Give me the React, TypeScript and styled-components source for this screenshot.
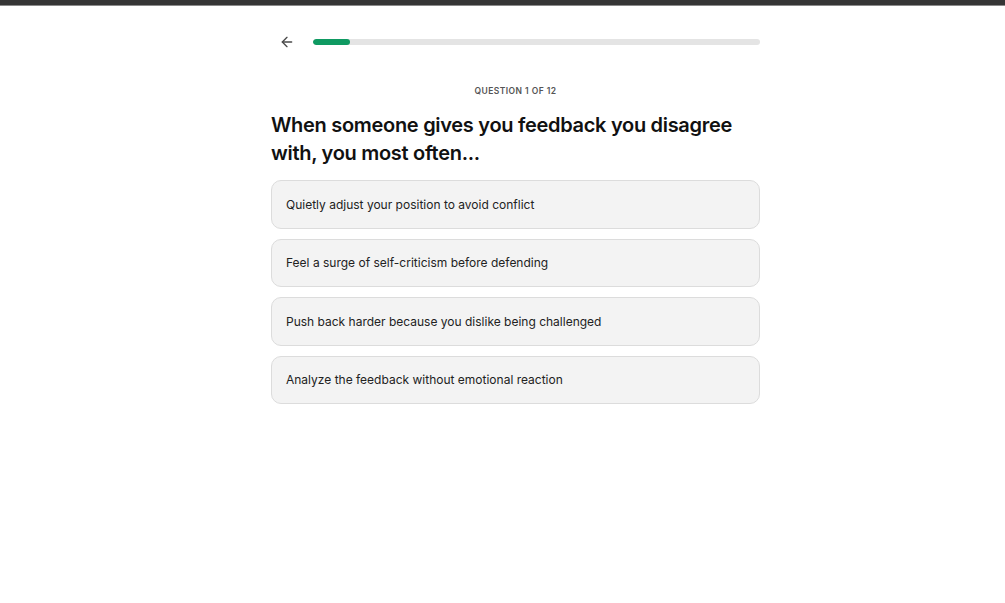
import styled, { createGlobalStyle } from "styled-components"
import { ArrowLeft } from "lucide-react"

const options = [
  "Quietly adjust your position to avoid conflict",
  "Feel a surge of self-criticism before defending",
  "Push back harder because you dislike being challenged",
  "Analyze the feedback without emotional reaction",
]

export default function App() {
  const current = 1
  const total = 12
  return (
    <>
      <GlobalStyle />
      <TopBar />
      <Page>
        <Column>
          <Header>
            <BackButton aria-label="Back">
              <ArrowLeft size={16} strokeWidth={2} />
            </BackButton>
            <Track>
              <Fill style={{ width: `${(current / total) * 100}%` }} />
            </Track>
          </Header>
          <Counter>
            Question {current} of {total}
          </Counter>
          <Question>When someone gives you feedback you disagree with, you most often...</Question>
          <Options>
            {options.map((o) => (
              <Option key={o}>{o}</Option>
            ))}
          </Options>
        </Column>
      </Page>
    </>
  )
}

const GlobalStyle = createGlobalStyle`
  body {
    margin: 0;
    background: #fff;
    font-family: Inter, "Noto Sans", sans-serif;
    color: #111;
  }
`

const TopBar = styled.div`
  height: 5px;
  background: #353535;
  border-bottom: 1px solid #8a8a8a;
`

const Page = styled.main`
  display: flex;
  justify-content: center;
  padding: 24px 0 0 26px;
`

const Column = styled.div`
  width: 489px;
  display: flex;
  flex-direction: column;
`

const Header = styled.div`
  height: 24px;
  display: flex;
  align-items: center;
  gap: 18px;
  padding-left: 8px;
`

const BackButton = styled.button`
  border: 0;
  background: none;
  padding: 0;
  width: 16px;
  height: 24px;
  display: flex;
  align-items: center;
  color: #4a4a4a;
  cursor: pointer;
`

const Track = styled.div`
  flex: 1;
  height: 6px;
  border-radius: 3px;
  background: #e4e4e4;
  overflow: hidden;
`

const Fill = styled.div`
  height: 100%;
  border-radius: 3px;
  background: #0f9a62;
`

const Counter = styled.div`
  margin-top: 31px;
  text-align: center;
  font-size: 8.5px;
  line-height: 12px;
  font-weight: 600;
  letter-spacing: 0.45px;
  text-transform: uppercase;
  color: #555;
`

const Question = styled.h1`
  margin: 14px 0 0;
  font-size: 20px;
  line-height: 28px;
  font-weight: 600;
  letter-spacing: -0.3px;
  color: #111;
`

const Options = styled.div`
  margin-top: 13px;
  display: flex;
  flex-direction: column;
  gap: 10px;
`

const Option = styled.button`
  height: 48.5px;
  box-sizing: border-box;
  display: flex;
  align-items: center;
  padding: 0 14px;
  border: 1px solid #dcdcdc;
  border-radius: 10px;
  background: #f3f3f3;
  font-family: inherit;
  font-size: 12px;
  color: #222;
  text-align: left;
  cursor: pointer;
`
